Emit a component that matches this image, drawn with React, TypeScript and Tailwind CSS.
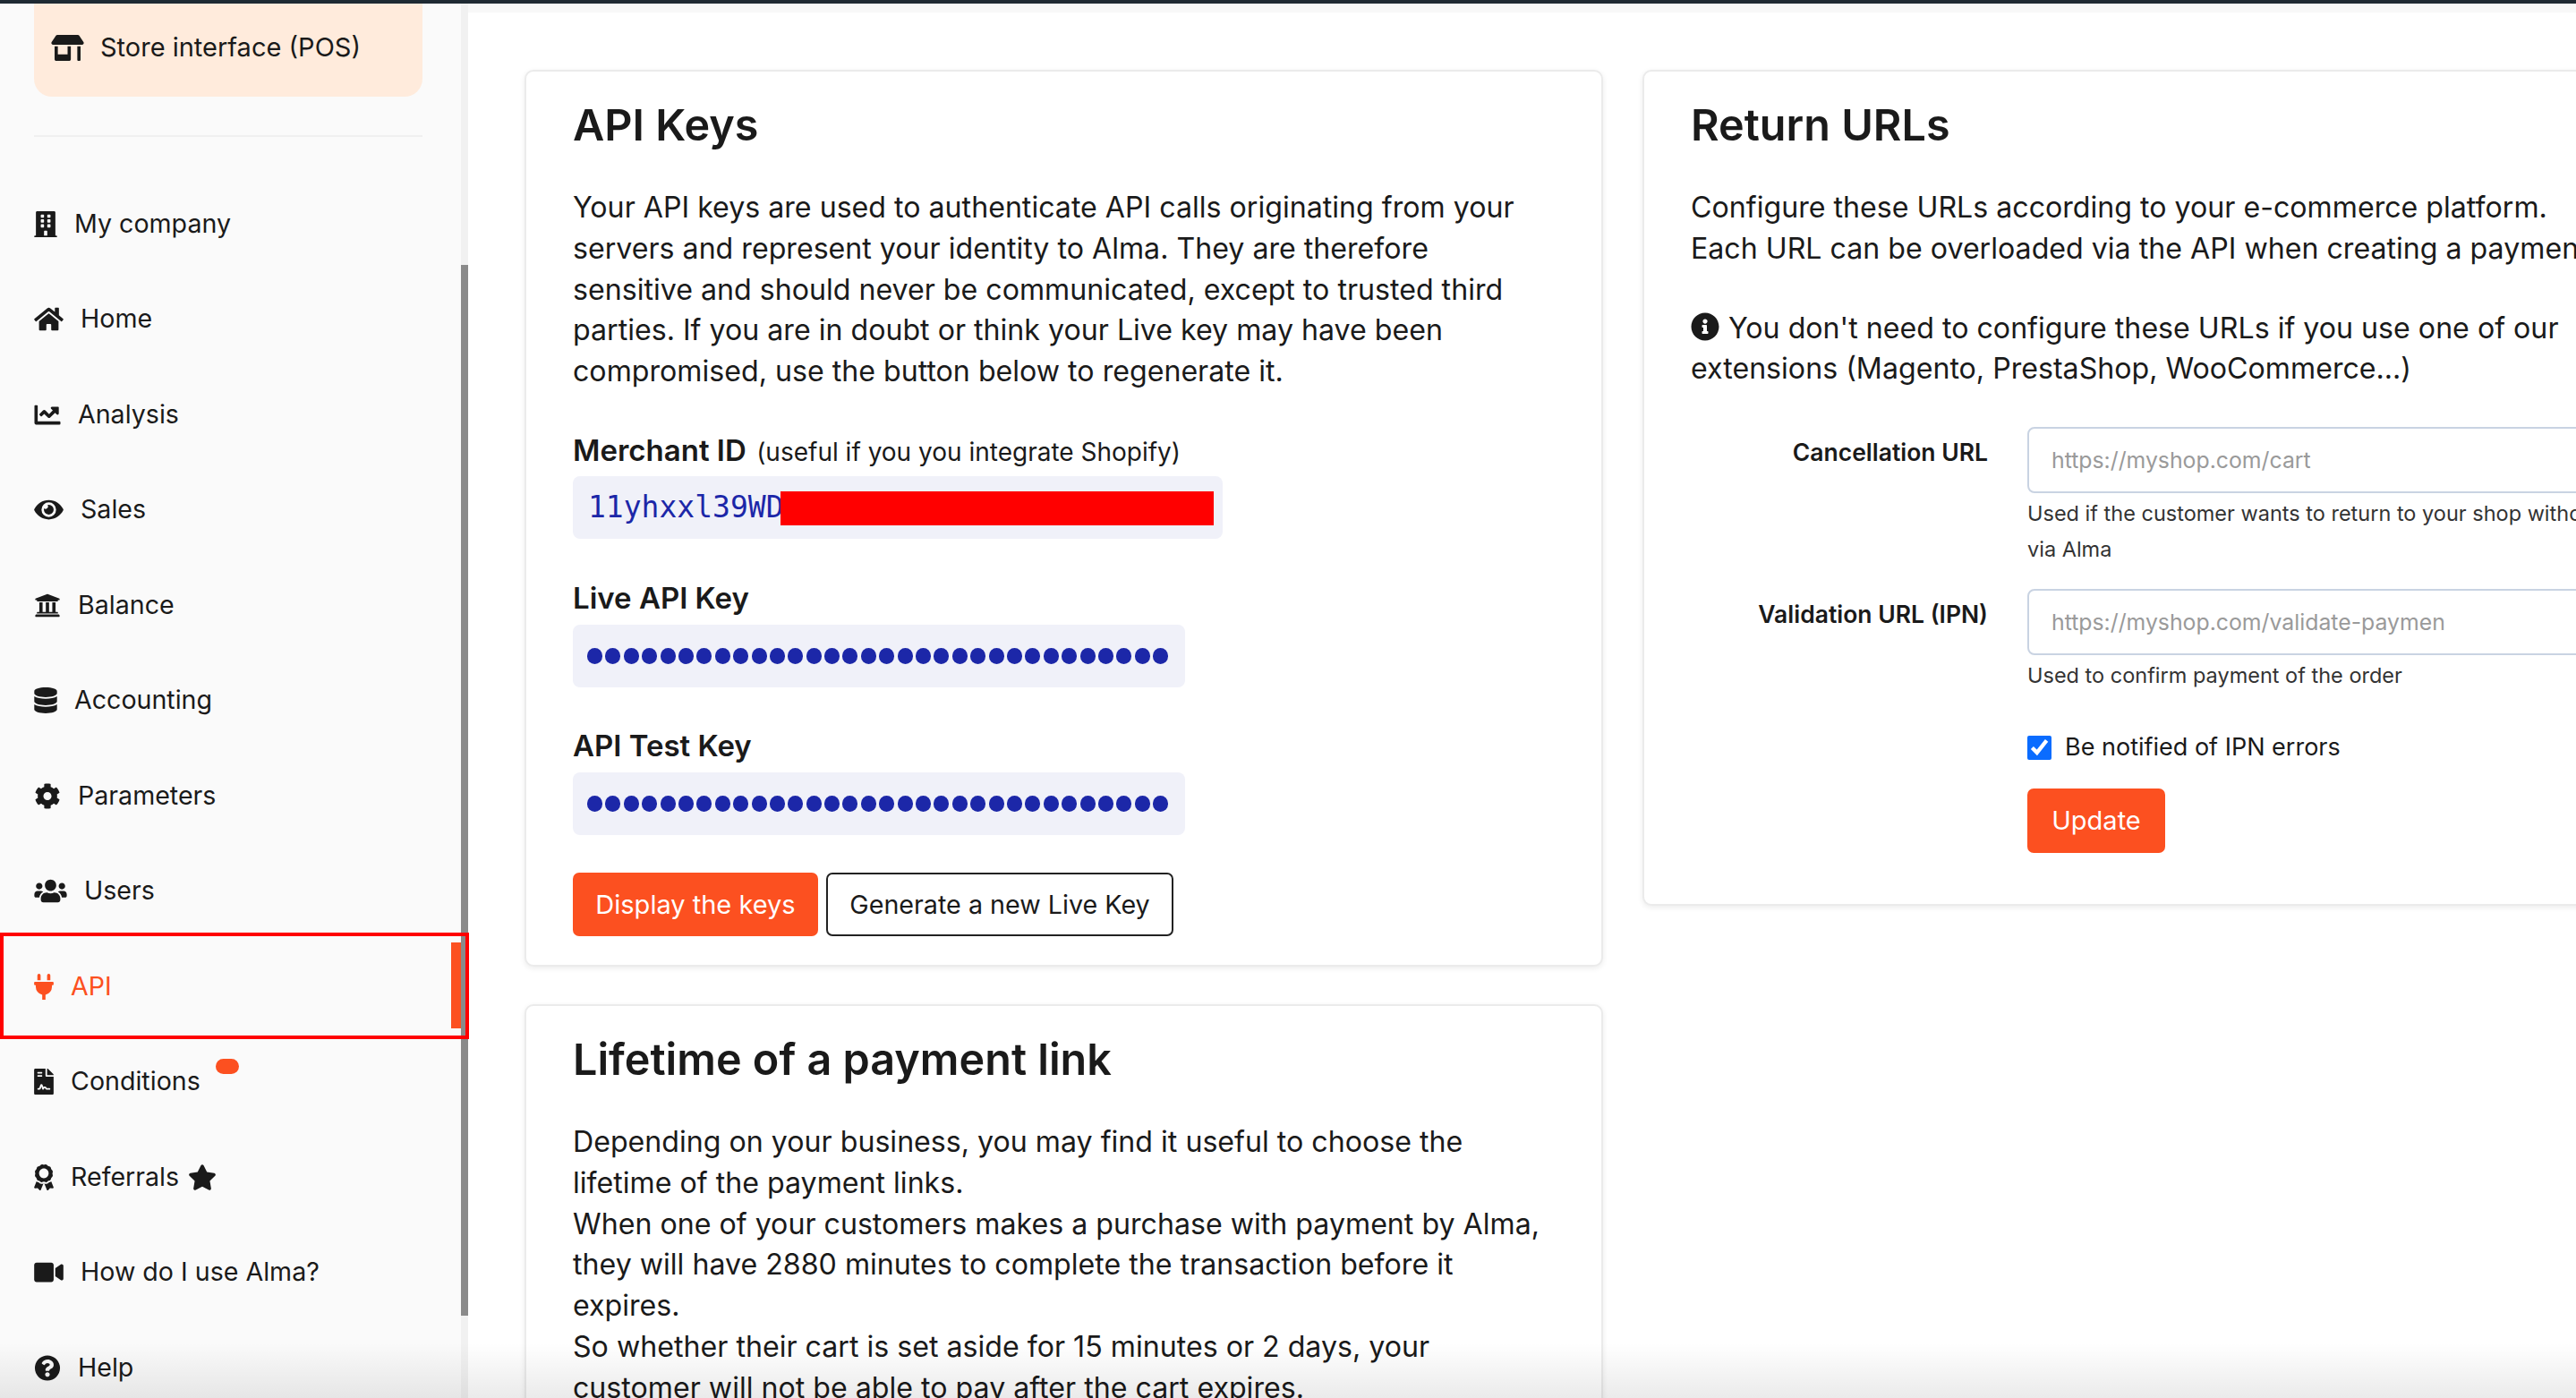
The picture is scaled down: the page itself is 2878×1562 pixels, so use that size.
import type { ReactNode } from 'react';
import {
  FaAward, FaBuilding, FaChartLine, FaCog, FaDatabase, FaEye, FaFileContract, FaHome,
  FaInfoCircle, FaPlug, FaQuestionCircle, FaStar, FaStoreAlt, FaUniversity, FaUsers, FaVideo,
} from 'react-icons/fa';

const navItems = [
  { label: 'My company', icon: <FaBuilding className="w-[26px] h-[29px] shrink-0" /> },
  { label: 'Home', icon: <FaHome className="w-[33px] h-[29px] shrink-0" /> },
  { label: 'Analysis', icon: <FaChartLine className="w-[30px] h-[29px] shrink-0" /> },
  { label: 'Sales', icon: <FaEye className="w-[33px] h-[29px] shrink-0" /> },
  { label: 'Balance', icon: <FaUniversity className="w-[30px] h-[29px] shrink-0" /> },
  { label: 'Accounting', icon: <FaDatabase className="w-[26px] h-[29px] shrink-0" /> },
  { label: 'Parameters', icon: <FaCog className="w-[30px] h-[29px] shrink-0" /> },
  { label: 'Users', icon: <FaUsers className="w-[37px] h-[29px] shrink-0" /> },
  { label: 'API', icon: <FaPlug className="w-[22px] h-[29px] shrink-0" />, active: true },
  { label: 'Conditions', icon: <FaFileContract className="w-[22px] h-[29px] shrink-0" />, badge: true },
  { label: 'Referrals', icon: <FaAward className="w-[22px] h-[29px] shrink-0" />, star: true },
  { label: 'How do I use Alma?', icon: <FaVideo className="w-[33px] h-[29px] shrink-0" /> },
  { label: 'Help', icon: <FaQuestionCircle className="w-[30px] h-[29px] shrink-0" /> },
];

function Sidebar() {
  return (
    <aside className="w-[523px] shrink-0 flex bg-[#fafafa] text-[#1a1a1a]">
      <div className="flex-1 min-w-0">
        <div className="ml-[38px] mr-[43px] h-[104px] rounded-b-[20px] bg-[#ffebdc] flex items-center gap-[18px] pl-[19px] pb-[6px] text-[29px]">
          <FaStoreAlt className="w-[37px] h-[29px] shrink-0" />
          <span>Store interface (POS)</span>
        </div>
        <div className="ml-[38px] mr-[43px] mt-[43px] h-[2px] bg-[#f0f0f0]" />
        <nav className="mt-[44px]">
          {navItems.map((item) => (
            <div
              key={item.label}
              className={`h-[106.5px] flex items-center gap-[19px] pl-[38px] text-[28.6px] relative ${item.active ? 'text-[#fc5020]' : ''}`}
            >
              {item.icon}
              <span>{item.label}</span>
              {item.star && <FaStar className="w-[32px] h-[29px] -ml-[9px]" />}
              {item.badge && <span className="absolute left-[241px] top-[27px] w-[26px] h-[17px] rounded-full bg-[#fc5020]" />}
              {item.active && <span className="absolute right-0 top-[4px] w-[11px] h-[96px] bg-[#fc5020]" />}
            </div>
          ))}
        </nav>
      </div>
      <div className="w-[8px] shrink-0 bg-[#f1f1f1]">
        <div className="mt-[292px] h-[1174px] bg-[#8a8a8a]" />
      </div>
    </aside>
  );
}

function Card({ title, children, className = '' }: { title: string; children: ReactNode; className?: string }) {
  return (
    <section className={`bg-white border-2 border-[#ebebeb] rounded-[10px] shadow-[0_2px_6px_rgba(0,0,0,0.08)] px-[52px] ${className}`}>
      <h2 className="text-[48.5px] leading-[60px] font-semibold text-[#1a1a1a] pt-[30px]">{title}</h2>
      {children}
    </section>
  );
}

function KeyLabel({ children }: { children: ReactNode }) {
  return <div className="text-[33px] leading-[40px] font-semibold text-[#1a1a1a]">{children}</div>;
}

function SecretKey() {
  return (
    <div className="mt-[10px] w-[684px] h-[70px] rounded-[8px] bg-[#f0f1f9] flex items-center pl-[16px] gap-[3.4px]">
      {Array.from({ length: 32 }).map((_, i) => (
        <span key={i} className="w-[17px] h-[18px] rounded-full bg-[#1c27a8] shrink-0" />
      ))}
    </div>
  );
}

function ApiKeysCard() {
  return (
    <Card title="API Keys" className="h-[1002px]">
      <p className="mt-[39px] text-[32.15px] leading-[45.8px] text-[#1a1a1a]">
        Your API keys are used to authenticate API calls originating from your<br />
        servers and represent your identity to Alma. They are therefore<br />
        sensitive and should never be communicated, except to trusted third<br />
        parties. If you are in doubt or think your Live key may have been<br />
        compromised, use the button below to regenerate it.
      </p>
      <div className="mt-[45px]">
        <KeyLabel>
          Merchant ID <span className="ml-[3px] text-[28px] font-normal">(useful if you you integrate Shopify)</span>
        </KeyLabel>
        <div className="mt-[7px] w-[726px] h-[70px] rounded-[8px] bg-[#f0f1f9] flex items-center pl-[17px] text-[33px] text-[#1c27a8] font-['DejaVu_Sans_Mono',monospace] relative overflow-hidden">
          11yhxxl39WD
          <span className="absolute left-[232px] top-[36px] -translate-y-1/2 w-[484px] h-[38px] bg-[#ff0000]" />
        </div>
      </div>
      <div className="mt-[46px]">
        <KeyLabel>Live API Key</KeyLabel>
        <SecretKey />
      </div>
      <div className="mt-[45px]">
        <KeyLabel>API Test Key</KeyLabel>
        <SecretKey />
      </div>
      <div className="mt-[42px] flex gap-[9px]">
        <button className="w-[274px] h-[71px] rounded-[7px] bg-[#fc5020] text-white text-[29px]">Display the keys</button>
        <button className="w-[388px] h-[71px] rounded-[7px] bg-white border-2 border-[#222] text-[#1a1a1a] text-[28.7px]">Generate a new Live Key</button>
      </div>
    </Card>
  );
}

function LifetimeCard() {
  return (
    <Card title="Lifetime of a payment link" className="mt-[42px] h-[600px]">
      <p className="mt-[39px] text-[32.15px] leading-[45.8px] text-[#1a1a1a]">
        Depending on your business, you may find it useful to choose the<br />
        lifetime of the payment links.<br />
        When one of your customers makes a purchase with payment by Alma,<br />
        they will have 2880 minutes to complete the transaction before it<br />
        expires.<br />
        So whether their cart is set aside for 15 minutes or 2 days, your<br />
        customer will not be able to pay after the cart expires.
      </p>
    </Card>
  );
}

function UrlField({ label, placeholder, help }: { label: string; placeholder: string; help: ReactNode }) {
  return (
    <div className="flex gap-[44px]">
      <label className="w-[332px] shrink-0 pt-[12px] text-right text-[26.5px] leading-[32px] font-semibold text-[#1a1a1a]">{label}</label>
      <div className="w-[900px] shrink-0">
        <input
          placeholder={placeholder}
          className="w-full h-[74px] rounded-[8px] border-2 border-[#c9d3e2] px-[25px] text-[24.8px] placeholder:text-[#9a9a9a] bg-white"
        />
        <div className="text-[23.5px] leading-[40px] text-[#333] mt-[3px]">{help}</div>
      </div>
    </div>
  );
}

function ReturnUrlsCard() {
  return (
    <Card title="Return URLs" className="h-[934px] w-[1260px]">
      <p className="mt-[39px] text-[32.15px] leading-[45.8px] text-[#1a1a1a] whitespace-nowrap">
        Configure these URLs according to your e-commerce platform.<br />
        Each URL can be overloaded via the API when creating a payment.
      </p>
      <p className="mt-[43px] text-[32.15px] leading-[45.8px] text-[#1a1a1a]">
        <FaInfoCircle className="inline w-[32px] h-[32px] mr-[10px] align-[-3px]" />
        You don't need to configure these URLs if you use one of our<br />
        extensions (Magento, PrestaShop, WooCommerce...)
      </p>
      <div className="mt-[42px] flex flex-col gap-[24px]">
        <UrlField
          label="Cancellation URL"
          placeholder="https://myshop.com/cart"
          help={<>Used if the customer wants to return to your shop without paying<br />via Alma</>}
        />
        <UrlField label="Validation URL (IPN)" placeholder="https://myshop.com/validate-paymen" help="Used to confirm payment of the order" />
      </div>
      <div className="pl-[376px]">
        <label className="mt-[40px] flex items-center gap-[15px] text-[27px] text-[#1a1a1a]">
          <input type="checkbox" defaultChecked className="w-[27px] h-[27px] accent-[#0a6cff]" />
          Be notified of IPN errors
        </label>
        <button className="mt-[25px] w-[154px] h-[72px] rounded-[7px] bg-[#fc5020] text-white text-[29px]">Update</button>
      </div>
    </Card>
  );
}

export default function App() {
  return (
    <div className="w-[2878px] h-[1562px] overflow-hidden relative bg-white font-['Inter',sans-serif] flex flex-col">
      <div className="h-[4px] shrink-0 bg-[#1f2a33]" />
      <div className="flex flex-1 min-h-0">
        <Sidebar />
        <main className="flex-1 min-w-0 flex gap-[44px] pl-[63px] pt-[64px] border-t-[10px] border-[#f8f8f8] overflow-hidden">
          <div className="w-[1205px] shrink-0">
            <ApiKeysCard />
            <LifetimeCard />
          </div>
          <div className="shrink-0">
            <ReturnUrlsCard />
          </div>
        </main>
      </div>
      {/* annotation box drawn on the screenshot */}
      <div className="absolute left-0 top-[1042px] w-[524px] h-[119px] border-[4px] border-[#ff0000] pointer-events-none" />
      <div className="absolute left-0 right-0 bottom-0 h-[62px] bg-gradient-to-b from-transparent to-black/8 pointer-events-none" />
    </div>
  );
}
